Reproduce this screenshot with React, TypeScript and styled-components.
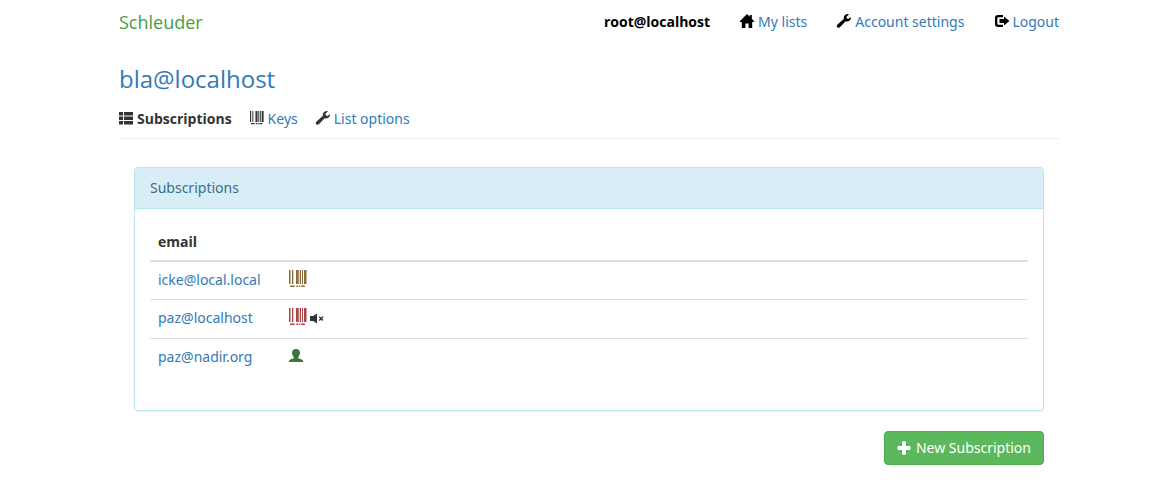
import React from 'react';
import styled, { createGlobalStyle } from 'styled-components';

const GlobalStyle = createGlobalStyle`
  *, *::before, *::after { box-sizing: border-box; }
  body {
    margin: 0;
    background: #fff;
    color: #333;
    font: 14px/20px "Noto Sans", "Open Sans", sans-serif;
  }
  a { color: #337ab7; text-decoration: none; }
  a:hover { text-decoration: underline; }
  strong, th { font-family: "Open Sans", "Noto Sans", sans-serif; }
`;

const Page = styled.div`
  padding: 0 92px 32px 119px;
`;

const TopBar = styled.header`
  display: flex;
  justify-content: space-between;
  align-items: center;
  height: 44px;
`;

const Brand = styled.a`
  && { color: #449d44; }
  font-family: "Open Sans", "Noto Sans", sans-serif;
  font-size: 18px;
`;

const TopNav = styled.nav`
  display: flex;
  gap: 30px;
  color: #000;
`;

const NavItem = styled.span`
  display: flex;
  align-items: center;
  gap: 4px;
  svg { margin-bottom: 2px; }
`;

const Title = styled.h1`
  margin: 21px 0 16px;
  font-family: "Open Sans", "Noto Sans", sans-serif;
  font-size: 24px;
  line-height: 28px;
  font-weight: 400;
`;

const Tabs = styled.nav`
  display: flex;
  gap: 18px;
  padding-bottom: 9px;
  border-bottom: 1px solid #eee;
`;

const Main = styled.main`
  padding: 28px 15px 0;
`;

const Panel = styled.section`
  border: 1px solid #b5e6ec;
  border-radius: 4px;
  box-shadow: 0 1px 1px rgba(0, 0, 0, 0.05);
`;

const PanelHeading = styled.h2`
  margin: 0;
  padding: 10px 15px;
  border-bottom: 1px solid #b5e6ec;
  border-radius: 3px 3px 0 0;
  background: #d9edf7;
  color: #31708f;
  font-size: 14px;
  font-weight: 400;
`;

const PanelBody = styled.div`
  padding: 15px 15px 33px;
`;

const Table = styled.table`
  width: 100%;
  border-spacing: 0;
`;

const HeadCell = styled.th<{ $width?: number }>`
  width: ${(p) => (p.$width ? `${p.$width}px` : 'auto')};
  padding: 8px;
  border-bottom: 2px solid #ddd;
  text-align: left;
`;

const Cell = styled.td`
  height: 37px;
  padding: 8px;
  vertical-align: top;
  tr + tr > & { border-top: 1px solid #ddd; height: 39px; }
`;

const Flags = styled.div`
  display: flex;
  align-items: center;
  gap: 3px;
  height: 18px;
`;

const Actions = styled.div`
  display: flex;
  justify-content: flex-end;
  margin-top: 20px;
`;

const PrimaryButton = styled.button`
  display: flex;
  align-items: center;
  gap: 5px;
  padding: 6px 12px;
  border: 1px solid #4cae4c;
  border-radius: 4px;
  background: #5cb85c;
  color: #fff;
  font: inherit;
  cursor: pointer;
`;

const Svg = styled.svg<{ $size: number; $color: string }>`
  flex: none;
  width: ${(p) => p.$size}px;
  height: ${(p) => p.$size}px;
  fill: ${(p) => p.$color};
`;

type IconName = 'home' | 'wrench' | 'logout' | 'list' | 'barcode' | 'muted' | 'user' | 'plus';

const shapes: Record<IconName, React.ReactNode> = {
  home: <path d="M7 0 9.8 2.8V1h2v3.8L14.4 7.4 13.8 8H12.2v6H8.6V9.5H5.4V14H1.8V8H.2L-.4 7.4z" />,
  wrench: (
    <path d="M14 3.200 11.200 5 9.500 4V2.700L12 .3C10-.3 7.700.6 7 2.500c-.3.900-.3 1.600-.1 2.300L.6 10.400c-1 .9-1 2-.3 2.800.8.800 2 .7 2.800-.2L8.700 7.200c1.700.5 3.500.1 4.600-1.400.7-.8.900-1.700.7-2.600z" />
  ),
  logout: (
    <>
      <path d="M9 1H4Q1 1 1 4v6q0 3 3 3h5v-2.300H4.500Q3.300 10.700 3.300 9.500V4.500Q3.300 3.300 4.500 3.300H9z" />
      <path d="M10 2.500 15.400 7 10 11.500V9H5.500V5H10z" />
    </>
  ),
  list: (
    <path d="M0 1h4v3.500H0zM5 1h9v3.500H5zM0 5.500h4V9H0zM5 5.500h9V9H5zM0 10h4v3.500H0zM5 10h9v3.500H5z" />
  ),
  barcode: (
    <>
      <path d="M0 0h1.500v14H0zM3 0h1.300v14H3zM7 0h2.700v14H7zM10.700 0h1.300v14h-1.300zM13 0h1v14h-1zM15 0h2.500v14H15z" />
      <path d="M1.200 15.500h4.600v1.500H1.200zM7.300 15.500h1.800v1.500H7.300zM9.800 15.500h1.500v1.500H9.800zM12.200 15.500h3.700v1.500h-3.700z" />
    </>
  ),
  muted: (
    <>
      <path d="M0 6h3.200L7 3.500v10L3.200 11H0z" />
      <path d="m9.200 6.700 3.800 3.800m0-3.800L9.200 10.500" stroke="#333" strokeWidth="1.400" />
    </>
  ),
  user: (
    <path d="M7 0c2.500 0 4 1.400 4 3.700 0 1.700-.7 3.200-1.700 4.100v1.400c1 .5 3.400 1 4.200 1.700.4.400.6 1.200.6 2.100H0c0-.9.200-1.700.6-2.100.8-.7 3.100-1.200 4.100-1.700V7.800C3.700 6.900 3 5.400 3 3.700 3 1.400 4.500 0 7 0z" />
  ),
  plus: <path d="M5 .5h4V5h4.500v4H9v4.500H5V9H.5V5H5z" />,
};

function Icon({
  name,
  size = 14,
  color = 'currentColor',
  label,
}: {
  name: IconName;
  size?: number;
  color?: string;
  label?: string;
}) {
  const box = name === 'barcode' ? 18 : 14;
  return (
    <Svg
      $size={size}
      $color={color}
      viewBox={`0 0 ${box} ${box}`}
      overflow="visible"
      role={label ? 'img' : undefined}
      aria-label={label}
      aria-hidden={label ? undefined : true}
    >
      {shapes[name]}
    </Svg>
  );
}

const subscriptions = [
  {
    email: 'icke@local.local',
    flags: <Icon name="barcode" size={18} color="#8a6d3b" label="Key" />,
  },
  {
    email: 'paz@localhost',
    flags: (
      <>
        <Icon name="barcode" size={18} color="#a94442" label="Key" />
        <Icon name="muted" label="Delivery disabled" />
      </>
    ),
  },
  {
    email: 'paz@nadir.org',
    flags: <Icon name="user" color="#3c763d" label="Admin" />,
  },
];

export default function App() {
  return (
    <>
      <GlobalStyle />
      <Page>
        <TopBar>
          <Brand href="#">Schleuder</Brand>
          <TopNav>
            <strong>root@localhost</strong>
            <NavItem>
              <Icon name="home" />
              <a href="#lists">My lists</a>
            </NavItem>
            <NavItem>
              <Icon name="wrench" />
              <a href="#account">Account settings</a>
            </NavItem>
            <NavItem>
              <Icon name="logout" />
              <a href="#logout">Logout</a>
            </NavItem>
          </TopNav>
        </TopBar>

        <Title>
          <a href="#list">bla@localhost</a>
        </Title>

        <Tabs>
          <NavItem>
            <Icon name="list" />
            <strong>Subscriptions</strong>
          </NavItem>
          <NavItem>
            <Icon name="barcode" />
            <a href="#keys">Keys</a>
          </NavItem>
          <NavItem>
            <Icon name="wrench" />
            <a href="#options">List options</a>
          </NavItem>
        </Tabs>

        <Main>
          <Panel>
            <PanelHeading>Subscriptions</PanelHeading>
            <PanelBody>
              <Table>
                <thead>
                  <tr>
                    <HeadCell $width={131}>email</HeadCell>
                    <HeadCell />
                  </tr>
                </thead>
                <tbody>
                  {subscriptions.map((s) => (
                    <tr key={s.email}>
                      <Cell>
                        <a href="#subscription">{s.email}</a>
                      </Cell>
                      <Cell>
                        <Flags>{s.flags}</Flags>
                      </Cell>
                    </tr>
                  ))}
                </tbody>
              </Table>
            </PanelBody>
          </Panel>
          <Actions>
            <PrimaryButton type="button">
              <Icon name="plus" />
              New Subscription
            </PrimaryButton>
          </Actions>
        </Main>
      </Page>
    </>
  );
}
